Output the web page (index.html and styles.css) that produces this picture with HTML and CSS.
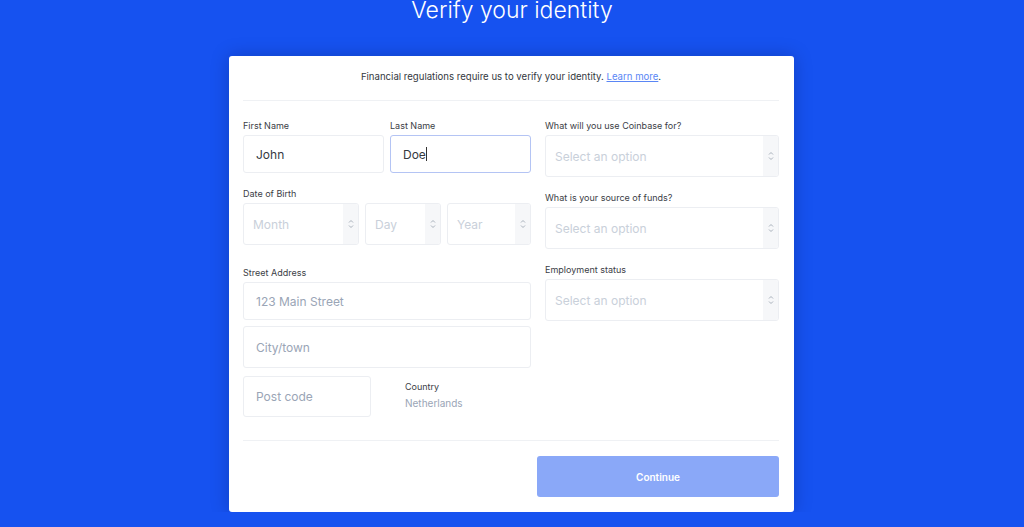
FILE: index.html
```html
<!DOCTYPE html>
<html lang="en">
<head>
    <meta charset="UTF-8">
    <meta name="viewport" content="width=device-width, initial-scale=1.0">
    <title>Verify your identity</title>
    <link rel="stylesheet" href="styles.css">
</head>
<body>
    <div class="page">
        <h1 class="title">Verify your identity</h1>
        <div class="card">
            <p class="intro">Financial regulations require us to verify your identity. <a href="#">Learn more</a>.</p>

            <div class="form">
                <div class="col-left">
                    <div class="name-row">
                        <div class="field">
                            <label>First Name</label>
                            <div class="input h38"><span class="value">John</span></div>
                        </div>
                        <div class="field">
                            <label>Last Name</label>
                            <div class="input h38 focused"><span class="value">Doe</span><span class="caret"></span></div>
                        </div>
                    </div>

                    <div class="field dob">
                        <label>Date of Birth</label>
                        <div class="dob-row">
                            <div class="select month"><span class="placeholder light">Month</span><span class="arrows"><svg width="8" height="12" viewBox="0 0 8 12"><path d="M2 4.5 4 2.5 6 4.5M2 7.5 4 9.5 6 7.5"/></svg></span></div>
                            <div class="select day"><span class="placeholder light">Day</span><span class="arrows"><svg width="8" height="12" viewBox="0 0 8 12"><path d="M2 4.5 4 2.5 6 4.5M2 7.5 4 9.5 6 7.5"/></svg></span></div>
                            <div class="select year"><span class="placeholder light">Year</span><span class="arrows"><svg width="8" height="12" viewBox="0 0 8 12"><path d="M2 4.5 4 2.5 6 4.5M2 7.5 4 9.5 6 7.5"/></svg></span></div>
                        </div>
                    </div>

                    <div class="field address">
                        <label>Street Address</label>
                        <div class="input h38"><span class="placeholder">123 Main Street</span></div>
                        <div class="input h42 city"><span class="placeholder">City/town</span></div>
                        <div class="post-row">
                            <div class="input post"><span class="placeholder">Post code</span></div>
                            <div class="country">
                                <label>Country</label>
                                <span class="country-value">Netherlands</span>
                            </div>
                        </div>
                    </div>
                </div>

                <div class="col-right">
                    <div class="field">
                        <label>What will you use Coinbase for?</label>
                        <div class="select"><span class="placeholder light">Select an option</span><span class="arrows"><svg width="8" height="12" viewBox="0 0 8 12"><path d="M2 4.5 4 2.5 6 4.5M2 7.5 4 9.5 6 7.5"/></svg></span></div>
                    </div>
                    <div class="field">
                        <label>What is your source of funds?</label>
                        <div class="select"><span class="placeholder light">Select an option</span><span class="arrows"><svg width="8" height="12" viewBox="0 0 8 12"><path d="M2 4.5 4 2.5 6 4.5M2 7.5 4 9.5 6 7.5"/></svg></span></div>
                    </div>
                    <div class="field">
                        <label>Employment status</label>
                        <div class="select"><span class="placeholder light">Select an option</span><span class="arrows"><svg width="8" height="12" viewBox="0 0 8 12"><path d="M2 4.5 4 2.5 6 4.5M2 7.5 4 9.5 6 7.5"/></svg></span></div>
                    </div>
                </div>
            </div>

            <div class="footer">
                <button class="btn-continue" disabled>Continue</button>
            </div>
        </div>
    </div>
</body>
</html>
```

FILE: styles.css
```css
body {
    margin: 0;
    background-color: #1652f0;
    font-family: Inter, 'Noto Sans', sans-serif;
    color: #333;
    overflow: hidden;
}
.page {
    width: 566px;
    margin: 0 auto;
}
.title {
    margin: 0;
    font-size: 23px;
    font-weight: 300;
    line-height: 20px;
    color: #fff;
    text-align: center;
}
.card {
    width: 565px;
    box-sizing: border-box;
    margin-top: 36px;
    background: #fff;
    border-radius: 3px;
    padding: 0 15px 0 14px;
    box-shadow: 0 0 18px rgba(0, 10, 60, 0.25);
}
.intro {
    margin: 0;
    padding: 14px 0 16px;
    font-size: 9.6px;
    line-height: 14px;
    text-align: center;
    color: #33383e;
    border-bottom: 1px solid #eff1f4;
}
.intro a {
    color: #5a86f5;
}
.form {
    display: flex;
    gap: 14px;
    padding: 18px 0 23px;
    border-bottom: 1px solid #eff1f4;
}
.col-left {
    width: 288px;
}
.col-right {
    flex: 1;
}
.col-right .field + .field {
    margin-top: 14px;
}
label {
    display: block;
    font-size: 9px;
    line-height: 13px;
    margin-bottom: 3px;
    color: #3b4046;
}
.name-row {
    display: flex;
    gap: 6px;
}
.name-row .field {
    flex: 1;
}
.input,
.select {
    display: flex;
    align-items: center;
    box-sizing: border-box;
    height: 42px;
    border: 1px solid #eceef2;
    border-radius: 3px;
    background: #fff;
    font-size: 12px;
}
.input {
    padding-left: 12px;
}
.input.h38 {
    height: 38px;
}
.input.focused {
    border-color: #b4c4f4;
}
.value {
    color: #34393f;
}
.caret {
    width: 1px;
    height: 14px;
    background: #333;
}
.placeholder {
    color: #9aa5b6;
}
.placeholder.light {
    color: #c9d0da;
}
.select {
    justify-content: space-between;
    padding-left: 9px;
    overflow: hidden;
}
.arrows {
    display: flex;
    align-items: center;
    justify-content: center;
    width: 15px;
    height: 100%;
    background: #f6f7f9;
}
.arrows svg {
    fill: none;
    stroke: #a9b1bc;
    stroke-width: 1;
}
.dob {
    margin-top: 14px;
}
.dob-row {
    display: flex;
    gap: 6px;
}
.month {
    width: 116px;
}
.day {
    width: 76px;
}
.year {
    flex: 1;
}
.address {
    margin-top: 21px;
}
.city {
    margin-top: 6px;
}
.post-row {
    display: flex;
    margin-top: 8px;
}
.post {
    width: 128px;
    height: 41px;
}
.country {
    margin-left: 34px;
    padding-top: 4px;
}
.country-value {
    display: block;
    font-size: 10px;
    line-height: 14px;
    color: #9aa5b6;
}
.footer {
    display: flex;
    justify-content: flex-end;
    padding: 15px 0;
}
.btn-continue {
    width: 242px;
    height: 41px;
    border: none;
    border-radius: 3px;
    background-color: #8aa8f8;
    color: #fff;
    font-family: inherit;
    font-size: 10px;
    font-weight: 600;
}
```
